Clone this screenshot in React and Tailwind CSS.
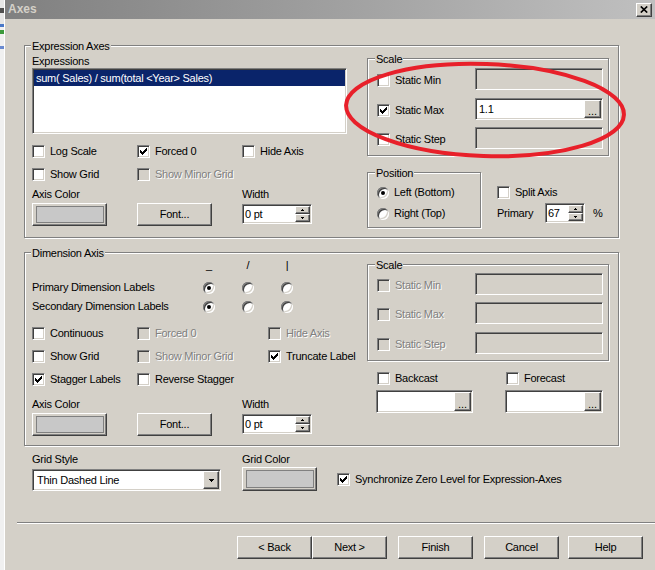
import React from 'react';

// classic win32 bevels
const sunken = "border border-t-[#808080] border-l-[#808080] border-r-white border-b-white shadow-[inset_1px_1px_0_#404040,inset_-1px_-1px_0_#d4d0c8]";
const raised = "border border-t-white border-l-white border-r-[#404040] border-b-[#404040] shadow-[inset_-1px_-1px_0_#808080]";
const etched = "border border-[#808080] shadow-[inset_1px_1px_0_#fff,1px_1px_0_#fff]";
const dis = "text-[#808080] [text-shadow:1px_1px_0_#fff]";

const CHECK = [2, 3, 4, 3, 2, 1, 0];

function Check({ on, off }) {
    return (
        <span className={`flex items-center justify-center w-[13px] h-[13px] shrink-0 ${sunken} ${off ? 'bg-[#d4d0c8]' : 'bg-white'}`}>
            {on && (
                <svg width="7" height="7" viewBox="0 0 7 7" shapeRendering="crispEdges">
                    {CHECK.map((y, x) => <rect key={x} x={x} y={y} width="1" height="3" fill="#000" />)}
                </svg>
            )}
        </span>
    );
}

function CB({ label, on, off, className = '' }) {
    return (
        <div className={`flex items-center h-[13px] gap-[5px] whitespace-nowrap ${className}`}>
            <Check on={on} off={off} />
            <span className={off ? dis : ''}>{label}</span>
        </div>
    );
}

function Radio({ on }) {
    return (
        <span className="flex items-center justify-center w-[12px] h-[12px] rounded-full bg-white shrink-0 shadow-[inset_1px_1px_0_#808080,inset_-1px_-1px_0_#fff,inset_2px_2px_0_#404040,inset_-2px_-2px_0_#d4d0c8]">
            {on && <span className="w-[4px] h-[4px] rounded-full bg-black" />}
        </span>
    );
}

function RadioLabel({ label, on }) {
    return (
        <div className="flex items-center h-[13px] gap-[5px] whitespace-nowrap">
            <Radio on={on} />
            <span>{label}</span>
        </div>
    );
}

function Group({ title, inner, className = '', children }) {
    return (
        <div className={`relative shrink-0 ${etched} ${className}`}>
            <span className={`absolute -top-[6px] px-[1px] bg-[#d4d0c8] whitespace-nowrap ${inner ? 'left-[7px]' : 'left-[6px]'}`}>{title}</span>
            {children}
        </div>
    );
}

function Field({ className = '', off, children }) {
    return (
        <div className={`flex items-center shrink-0 p-[1px] ${sunken} ${off ? 'bg-[#d4d0c8]' : 'bg-white'} ${className}`}>
            {children}
        </div>
    );
}

function Btn({ className = '', children }) {
    return (
        <div className={`flex items-center justify-center shrink-0 bg-[#d4d0c8] whitespace-nowrap ${raised} ${className}`}>
            {children}
        </div>
    );
}

function Dots() {
    return (
        <Btn className="ml-auto w-[17px] h-full items-end pb-[2px]">
            <span className="leading-[8px] tracking-normal">...</span>
        </Btn>
    );
}

function Tri({ up, w = 3 }) {
    const rows = [];
    const n = Math.ceil(w / 2);
    for (let i = 0; i < n; i++) {
        const width = up ? 1 + i * 2 : w - i * 2;
        rows.push(<rect key={i} x={(w - width) / 2} y={i} width={width} height="1" fill="#000" />);
    }
    return (
        <svg width={w} height={n} viewBox={`0 0 ${w} ${n}`} shapeRendering="crispEdges">{rows}</svg>
    );
}

function Spin({ value, className = '' }) {
    return (
        <Field className={className}>
            <span className="flex-1 pl-[1px]">{value}</span>
            <span className="flex flex-col w-[15px] h-full">
                <Btn className="flex-1 w-full"><Tri up /></Btn>
                <Btn className="flex-1 w-full"><Tri /></Btn>
            </span>
        </Field>
    );
}

function ColorBtn() {
    return (
        <Btn className="w-[75px] h-[23px]">
            <span className="w-[68px] h-[17px] bg-[#c8c8c8] border border-[#808080]" />
        </Btn>
    );
}

function ScaleRow({ label, off, on, value, dots, className = '' }) {
    return (
        <div className={`flex items-center h-[22px] ${className}`}>
            <div className="w-[98px] mt-[3px]"><CB label={label} on={on} off={off} /></div>
            <Field off={!value && !dots} className="w-[128px] h-[22px]">
                {value && <span className="pl-[2px]">{value}</span>}
                {dots && <Dots />}
            </Field>
        </div>
    );
}

export default function App() {
    return (
        <div className="relative w-[655px] h-[570px] overflow-hidden flex bg-[#d4d0c8] font-['Liberation_Sans',Arial,sans-serif] text-[11px] leading-[13px] tracking-[-0.25px] text-black">

            {/* app behind the dialog */}
            <div className="w-[4px] shrink-0 flex flex-col bg-[#f0f0f0]">
                <div className="h-[8px] bg-[#e6e6e6]" />
                <div className="h-[5px] bg-[#505050]" />
                <div className="h-[11px] bg-[#e6e6e6]" />
                <div className="h-[3px] bg-[#4a78c8]" />
                <div className="h-[3px]" />
                <div className="h-[4px] bg-[#3c9a3c]" />
                <div className="h-[12px]" />
                <div className="h-[3px] bg-[#6a8ad0]" />
            </div>

            <div className="flex-1 min-w-0 flex flex-col border-l border-white">

                {/* title bar */}
                <div className="h-[19px] shrink-0 flex items-center pl-[3px] pr-[3px] bg-linear-to-r from-[#808080] to-[#c0c0c0]">
                    <span className="font-bold text-[12px] tracking-normal text-[#d4d0c8]">Axes</span>
                    <Btn className="ml-auto w-[16px] h-[14px]">
                        <svg width="8" height="7" viewBox="0 0 8 7">
                            <path d="M0.8 0.5 L7.2 6.5 M7.2 0.5 L0.8 6.5" stroke="#000" strokeWidth="1.7" fill="none" />
                        </svg>
                    </Btn>
                </div>

                <div className="flex flex-col pl-[12px]">

                    {/* Expression Axes */}
                    <Group title="Expression Axes" className="ml-[7px] mt-[26px] w-[595px] h-[193px] flex pl-[7px]">
                        <div className="w-[315px] flex flex-col">
                            <span className="mt-[9px]">Expressions</span>
                            <div className={`h-[66px] bg-white p-[1px] ${sunken}`}>
                                <div className="h-[16px] leading-[16px] pl-[2px] bg-[#0a246a] text-white">
                                    sum( Sales) / sum(total &lt;Year&gt; Sales)
                                </div>
                            </div>
                            <div className="mt-[11px] grid grid-cols-[105px_105px_105px]">
                                <CB label="Log Scale" />
                                <CB label="Forced 0" on />
                                <CB label="Hide Axis" />
                            </div>
                            <div className="mt-[10px] grid grid-cols-[105px_105px_105px]">
                                <CB label="Show Grid" />
                                <CB label="Show Minor Grid" off />
                            </div>
                            <div className="mt-[7px] grid grid-cols-[210px_105px]">
                                <span>Axis Color</span>
                                <span>Width</span>
                            </div>
                            <div className="mt-[2px] flex items-start">
                                <ColorBtn />
                                <Btn className="ml-[30px] w-[75px] h-[23px]">Font...</Btn>
                                <Spin value="0 pt" className="ml-[30px] mt-[1px] w-[70px] h-[20px]" />
                            </div>
                        </div>

                        <div className="ml-[20px] w-[242px] flex flex-col pt-[12px]">
                            <Group title="Scale" inner className="w-[242px] h-[98px] flex flex-col pl-[9px]">
                                <ScaleRow label="Static Min" className="mt-[9px]" />
                                <ScaleRow label="Static Max" on value="1.1" dots className="mt-[8px]" />
                                <ScaleRow label="Static Step" className="mt-[7px]" />
                            </Group>
                            <div className="mt-[16px] flex">
                                <Group title="Position" inner className="w-[114px] h-[56px] flex flex-col pl-[9px]">
                                    <div className="mt-[13px]"><RadioLabel label="Left (Bottom)" on /></div>
                                    <div className="mt-[8px]"><RadioLabel label="Right (Top)" /></div>
                                </Group>
                                <div className="ml-[16px] flex flex-col">
                                    <CB label="Split Axis" className="mt-[14px]" />
                                    <div className="mt-[4px] flex items-center h-[20px]">
                                        <span className="w-[48px]">Primary</span>
                                        <Spin value="67" className="w-[40px] h-[20px]" />
                                        <span className="ml-[8px]">%</span>
                                    </div>
                                </div>
                            </div>
                        </div>
                    </Group>

                    {/* Dimension Axis */}
                    <Group title="Dimension Axis" className="ml-[7px] mt-[14px] w-[595px] h-[194px] flex pl-[7px]">
                        <div className="w-[335px] flex flex-col">
                            <div className="mt-[6px] flex h-[13px]">
                                <span className="w-[171px]" />
                                <span className="w-[12px] text-center">_</span>
                                <span className="ml-[27px] w-[12px] text-center">/</span>
                                <span className="ml-[27px] w-[12px] text-center">|</span>
                            </div>
                            <div className="mt-[9px] flex items-center h-[13px]">
                                <span className="w-[171px]">Primary Dimension Labels</span>
                                <Radio on />
                                <span className="ml-[27px]"><Radio /></span>
                                <span className="ml-[27px]"><Radio /></span>
                            </div>
                            <div className="mt-[6px] flex items-center h-[13px]">
                                <span className="w-[171px]">Secondary Dimension Labels</span>
                                <Radio on />
                                <span className="ml-[27px]"><Radio /></span>
                                <span className="ml-[27px]"><Radio /></span>
                            </div>
                            <div className="mt-[14px] grid grid-cols-[105px_131px_auto]">
                                <CB label="Continuous" />
                                <CB label="Forced 0" off />
                                <CB label="Hide Axis" off />
                            </div>
                            <div className="mt-[10px] grid grid-cols-[105px_131px_auto]">
                                <CB label="Show Grid" />
                                <CB label="Show Minor Grid" off />
                                <CB label="Truncate Label" on />
                            </div>
                            <div className="mt-[10px] grid grid-cols-[105px_131px_auto]">
                                <CB label="Stagger Labels" on />
                                <CB label="Reverse Stagger" />
                            </div>
                            <div className="mt-[12px] grid grid-cols-[210px_105px]">
                                <span>Axis Color</span>
                                <span>Width</span>
                            </div>
                            <div className="mt-[2px] flex items-start">
                                <ColorBtn />
                                <Btn className="ml-[30px] w-[75px] h-[23px]">Font...</Btn>
                                <Spin value="0 pt" className="ml-[30px] mt-[1px] w-[70px] h-[20px]" />
                            </div>
                        </div>

                        <div className="w-[242px] flex flex-col pt-[11px]">
                            <Group title="Scale" inner className="w-[242px] h-[97px] flex flex-col pl-[9px]">
                                <ScaleRow label="Static Min" off className="mt-[8px]" />
                                <ScaleRow label="Static Max" off className="mt-[7px]" />
                                <ScaleRow label="Static Step" off className="mt-[8px]" />
                            </Group>
                            <div className="mt-[11px] flex pl-[10px]">
                                <div className="w-[129px]"><CB label="Backcast" /></div>
                                <CB label="Forecast" />
                            </div>
                            <div className="mt-[5px] flex pl-[9px]">
                                <Field className="w-[97px] h-[23px]"><Dots /></Field>
                                <Field className="ml-[32px] w-[98px] h-[23px]"><Dots /></Field>
                            </div>
                        </div>
                    </Group>

                    {/* grid settings */}
                    <div className="ml-[15px] mt-[7px] flex">
                        <div className="w-[210px] flex flex-col">
                            <span>Grid Style</span>
                            <Field className="mt-[3px] w-[189px] h-[22px]">
                                <span className="flex-1 pl-[3px]">Thin Dashed Line</span>
                                <Btn className="w-[16px] h-full"><Tri w={5} /></Btn>
                            </Field>
                        </div>
                        <div className="w-[95px] flex flex-col">
                            <span>Grid Color</span>
                            <div className="mt-[1px]">
                                <Btn className="w-[75px] h-[24px]">
                                    <span className="w-[68px] h-[18px] bg-[#c8c8c8] border border-[#808080]" />
                                </Btn>
                            </div>
                        </div>
                        <CB label="Synchronize Zero Level for Expression-Axes" on className="mt-[20px]" />
                    </div>

                    <div className="mt-[31px] h-[2px] border-t border-t-[#808080] border-b border-b-white" />

                    <div className="mt-[12px] flex pl-[220px]">
                        <Btn className="w-[75px] h-[23px]">{'< Back'}</Btn>
                        <Btn className="w-[75px] h-[23px]">{'Next >'}</Btn>
                        <Btn className="ml-[11px] w-[75px] h-[23px]">Finish</Btn>
                        <Btn className="ml-[11px] w-[75px] h-[23px]">Cancel</Btn>
                        <Btn className="ml-[9px] w-[75px] h-[23px]">Help</Btn>
                    </div>
                </div>
            </div>

            {/* hand-drawn highlight */}
            <svg className="absolute left-[340px] top-[58px] pointer-events-none" width="292" height="104" viewBox="0 0 292 104">
                <ellipse cx="145" cy="52" rx="139" ry="46" fill="none" stroke="#e8202a" strokeWidth="4" transform="rotate(2 145 52)" />
            </svg>
        </div>
    );
}
